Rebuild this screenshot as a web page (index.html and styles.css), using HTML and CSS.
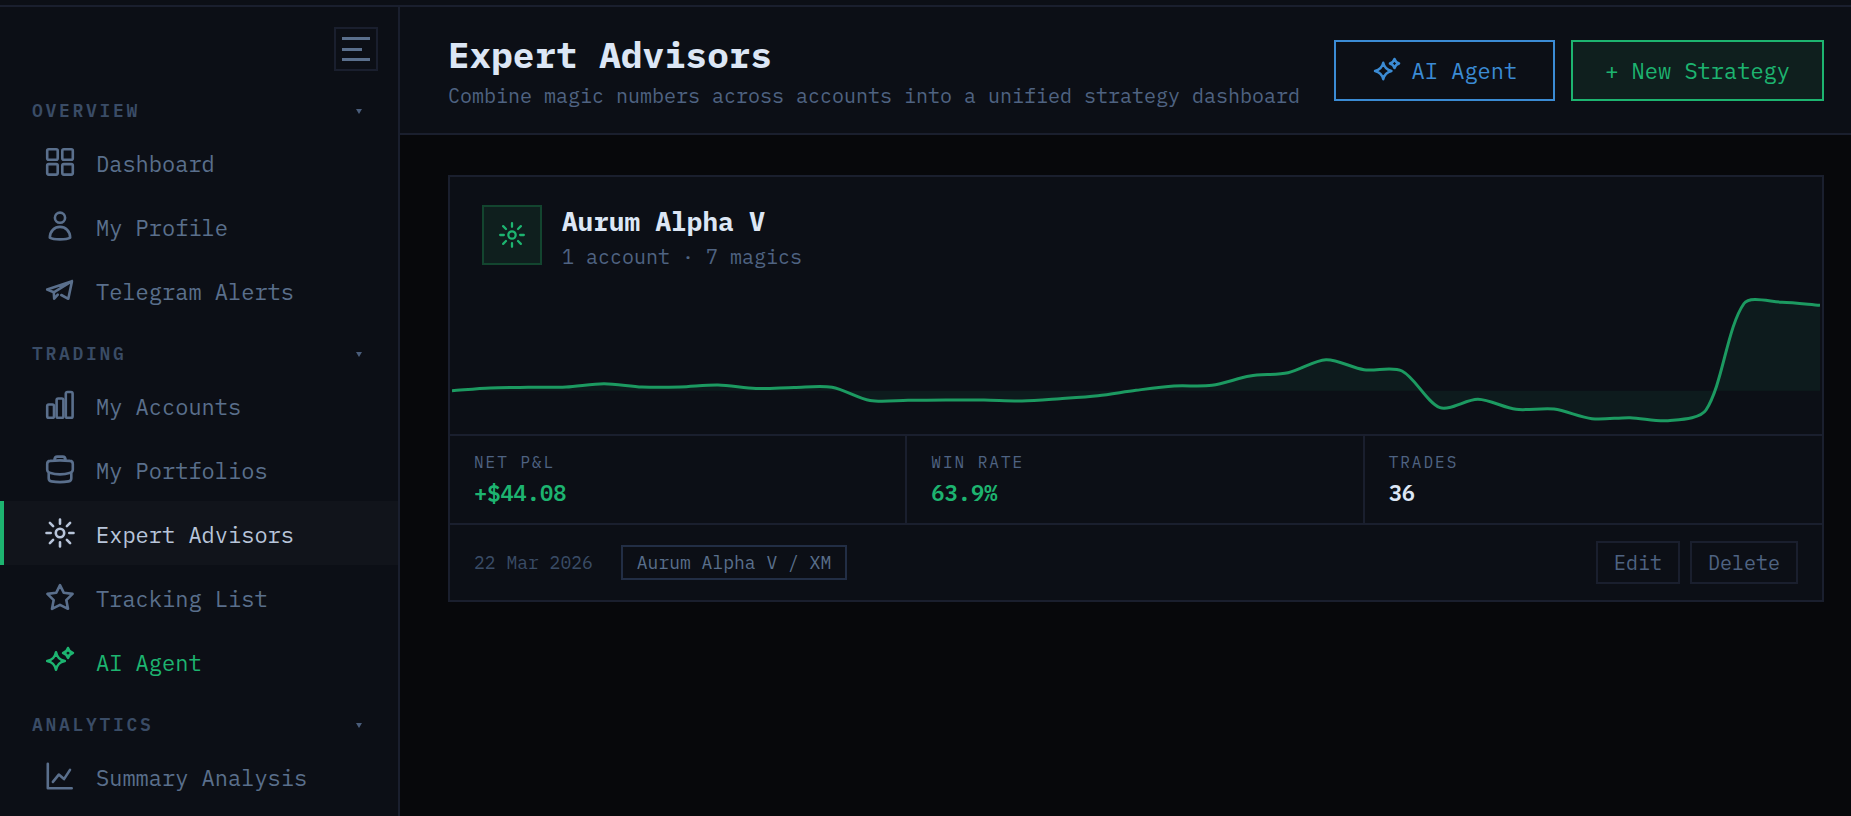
FILE: index.html
```html
<!DOCTYPE html>
<html lang="en">
<head>
    <meta charset="UTF-8">
    <meta name="viewport" content="width=device-width, initial-scale=1.0">
    <title>Expert Advisors</title>
    <link rel="stylesheet" href="styles.css">
</head>
<body>
    <div class="topbar"></div>
    <div class="layout">
        <aside class="sidebar">
            <div class="sidebar-top">
                <button class="menu-toggle" type="button" aria-label="Toggle menu">
                    <span></span>
                    <span class="short"></span>
                    <span></span>
                </button>
            </div>
            <nav>
                <h2 class="nav-section">Overview<i class="caret"></i></h2>
                <a href="#" class="nav-item">
                    <svg class="icon" viewBox="0 0 32 32"><rect x="3.2" y="3.2" width="10.5" height="10.5" rx="1.5"/><rect x="18.3" y="3.2" width="10.5" height="10.5" rx="1.5"/><rect x="3.2" y="18.1" width="10.5" height="10.5" rx="1.5"/><rect x="18.3" y="18.1" width="10.5" height="10.5" rx="1.5"/></svg>
                    <span>Dashboard</span>
                </a>
                <a href="#" class="nav-item">
                    <svg class="icon" viewBox="0 0 32 32"><circle cx="16" cy="7.7" r="5.1"/><path d="M5.8 27.6C6 21 10.6 16.9 16 16.9s10 4.1 10.2 10.7C22.5 29.9 9.5 29.9 5.8 27.6z"/></svg>
                    <span>My Profile</span>
                </a>
                <a href="#" class="nav-item">
                    <svg class="icon" viewBox="0 0 32 32"><path d="M28 7.2 3.2 15.6l6.6 2.7.4 6.3 3.6-4M28 7.2l-3.7 17.6-7-3.8M28 7.2 9.8 18.3"/></svg>
                    <span>Telegram Alerts</span>
                </a>

                <h2 class="nav-section">Trading<i class="caret"></i></h2>
                <a href="#" class="nav-item">
                    <svg class="icon" viewBox="0 0 32 32"><rect x="3.2" y="15.5" width="6.8" height="13.3" rx="1.6"/><rect x="12.6" y="9.5" width="6.8" height="19.3" rx="1.6"/><rect x="21.8" y="3" width="6.8" height="25.8" rx="1.6"/></svg>
                    <span>My Accounts</span>
                </a>
                <a href="#" class="nav-item">
                    <svg class="icon" viewBox="0 0 32 32"><path d="M10.4 7.6C10.4 4.8 11.4 3.6 13.4 3.6h5.2c2 0 3 1.2 3 4M3.2 11c0-2 1.2-3 3-3.1 6-.6 13.6-.6 19.6 0 1.8.1 3 1.1 3 3.1v5.5c0 1.7-.8 2.7-2.4 3.2-6 1.9-14.8 1.9-20.8 0-1.6-.5-2.4-1.5-2.4-3.2zM4.7 19.2v6c0 1.8.9 2.9 2.7 3.2 5.2.9 12 .9 17.2 0 1.8-.3 2.7-1.4 2.7-3.2v-6"/></svg>
                    <span>My Portfolios</span>
                </a>
                <a href="#" class="nav-item active">
                    <svg class="icon" viewBox="0 0 32 32"><circle cx="16" cy="16" r="4.2"/><path d="M16 2.5v4.2M16 25.3v4.2M2.5 16h4.2M25.3 16h4.2M5.9 5.9l3.2 3.2M22.9 22.9l3.2 3.2M5.9 26.1l3.2-3.2M22.9 9.1l3.2-3.2"/></svg>
                    <span>Expert Advisors</span>
                </a>
                <a href="#" class="nav-item">
                    <svg class="icon" viewBox="0 0 32 32"><path d="M16 4.2 19.7 11.7 28.6 12.9 22.3 19.1 24 27.8 16 23.8 8 27.8 9.7 19.1 3.4 12.9 12.3 11.7z"/></svg>
                    <span>Tracking List</span>
                </a>
                <a href="#" class="nav-item ai">
                    <svg class="icon" viewBox="0 0 32 32"><path d="M12 7.2C13.2 12.6 15.4 14.8 20.8 16 15.4 17.2 13.2 19.4 12 24.8 10.8 19.4 8.6 17.2 3.2 16 8.6 14.8 10.8 12.6 12 7.2zM24 3.1C24.8 6 26 7.2 28.9 8 26 8.8 24.8 10 24 12.9 23.2 10 22 8.8 19.1 8 22 7.2 23.2 6 24 3.1z"/></svg>
                    <span>AI Agent</span>
                </a>

                <h2 class="nav-section">Analytics<i class="caret"></i></h2>
                <a href="#" class="nav-item">
                    <svg class="icon" viewBox="0 0 32 32"><path d="M3.8 3.8v24.5h23.9M8.9 21.9l5.9-7.3 5.2 4.5 6-9.2"/></svg>
                    <span>Summary Analysis</span>
                </a>
            </nav>
        </aside>

        <main class="main">
            <header class="page-header">
                <div>
                    <h1>Expert Advisors</h1>
                    <p class="subtitle">Combine magic numbers across accounts into a unified strategy dashboard</p>
                </div>
                <div class="header-actions">
                    <button class="btn btn-blue" type="button">
                        <svg class="icon" viewBox="0 0 32 32"><path d="M12 7.2C13.2 12.6 15.4 14.8 20.8 16 15.4 17.2 13.2 19.4 12 24.8 10.8 19.4 8.6 17.2 3.2 16 8.6 14.8 10.8 12.6 12 7.2zM24 3.1C24.8 6 26 7.2 28.9 8 26 8.8 24.8 10 24 12.9 23.2 10 22 8.8 19.1 8 22 7.2 23.2 6 24 3.1z"/></svg>
                        AI Agent
                    </button>
                    <button class="btn btn-green" type="button">+ New Strategy</button>
                </div>
            </header>

            <section class="content">
                <article class="card">
                    <div class="card-head">
                        <div class="card-icon">
                            <svg class="icon" viewBox="0 0 32 32"><circle cx="16" cy="16" r="4.2"/><path d="M16 2.5v4.2M16 25.3v4.2M2.5 16h4.2M25.3 16h4.2M5.9 5.9l3.2 3.2M22.9 22.9l3.2 3.2M5.9 26.1l3.2-3.2M22.9 9.1l3.2-3.2"/></svg>
                        </div>
                        <div>
                            <h3>Aurum Alpha V</h3>
                            <p class="card-meta">1 account · 7 magics</p>
                        </div>
                    </div>
                    <svg class="chart" viewBox="0 0 1368 145" preserveAspectRatio="none">
                        <path class="chart-area" id="chart-area"/>
                        <path class="chart-line" id="chart-line"/>
                    </svg>
                    <dl class="stats">
                        <div class="stat">
                            <dt>NET P&amp;L</dt>
                            <dd class="positive">+$44.08</dd>
                        </div>
                        <div class="stat">
                            <dt>WIN RATE</dt>
                            <dd class="positive">63.9%</dd>
                        </div>
                        <div class="stat">
                            <dt>TRADES</dt>
                            <dd>36</dd>
                        </div>
                    </dl>
                    <footer class="card-foot">
                        <span class="date">22 Mar 2026</span>
                        <span class="tag">Aurum Alpha V / XM</span>
                        <div class="card-actions">
                            <button class="btn-small" type="button">Edit</button>
                            <button class="btn-small" type="button">Delete</button>
                        </div>
                    </footer>
                </article>
            </section>
        </main>
    </div>
    <script src="script.js"></script>
</body>
</html>
```
FILE: styles.css
```css
* {
    box-sizing: border-box;
    margin: 0;
    padding: 0;
}
body {
    display: flex;
    flex-direction: column;
    height: 100vh;
    overflow: hidden;
    background-color: #07080b;
    color: #dce6f5;
    font-family: "IBM Plex Mono", "Liberation Mono", monospace;
    font-size: 22px;
}
button {
    font-family: inherit;
    background: none;
    cursor: pointer;
}
.topbar {
    flex: none;
    height: 7px;
    background-color: #0c0f16;
    border-bottom: 2px solid #1a1f2e;
}
.layout {
    display: flex;
    flex: 1;
    min-height: 0;
}
.icon {
    flex: none;
    width: 32px;
    height: 32px;
    fill: none;
    stroke: currentColor;
    stroke-width: 2.6;
    stroke-linecap: round;
    stroke-linejoin: round;
}

/* Sidebar */
.sidebar {
    flex: none;
    width: 400px;
    overflow: hidden;
    background-color: #0c0f16;
    border-right: 2px solid #1a1f2e;
}
.sidebar-top {
    display: flex;
    justify-content: flex-end;
    padding: 20px 20px 8px;
}
.menu-toggle {
    display: flex;
    flex-direction: column;
    justify-content: space-between;
    width: 44px;
    height: 44px;
    padding: 8px 6px;
    border: 2px solid #1a1f2e;
}
.menu-toggle span {
    width: 28px;
    height: 3px;
    background-color: #5a6f8c;
}
.menu-toggle .short {
    width: 20px;
}
.nav-section {
    display: flex;
    align-items: center;
    justify-content: space-between;
    padding: 20px 36px 7px 32px;
    color: #3a4c66;
    font-size: 18px;
    font-weight: 600;
    line-height: 24px;
    letter-spacing: 0.15em;
    text-transform: uppercase;
}
.caret {
    border: 3px solid transparent;
    border-top: 5px solid #4a5d7a;
    border-bottom: 0;
}
.nav-item {
    display: flex;
    align-items: center;
    gap: 20px;
    height: 64px;
    padding-left: 40px;
    border-left: 4px solid transparent;
    color: #5a6f8c;
    text-decoration: none;
}
.nav-item span {
    padding-top: 2px;
}
.nav-item.active {
    background-color: #11141b;
    border-left-color: #1db470;
    color: #b8c5da;
}
.nav-item.ai {
    color: #1db470;
}

/* Page header */
.main {
    flex: 1;
    min-width: 0;
}
.page-header {
    display: flex;
    align-items: flex-start;
    justify-content: space-between;
    height: 128px;
    padding: 24px 27px 0 48px;
    background-color: #0c0f16;
    border-bottom: 2px solid #1a1f2e;
}
h1 {
    font-size: 36px;
    line-height: 48px;
}
.subtitle {
    margin-top: 4px;
    color: #4f6382;
    font-size: 20px;
    line-height: 26px;
    white-space: nowrap;
}
.header-actions {
    display: flex;
    gap: 16px;
    padding-top: 9px;
}
.btn {
    display: flex;
    align-items: center;
    height: 61px;
    padding: 0 32px;
    border: 2px solid;
    font-size: 22px;
    white-space: nowrap;
}
.btn-blue {
    gap: 10px;
    padding: 0 36px;
    color: #3b8bd4;
}
.btn-blue .icon {
    width: 30px;
    height: 30px;
}
.btn-green {
    background-color: #0f1f1e;
    color: #1db470;
}

/* Strategy card */
.content {
    padding: 40px 27px 40px 48px;
}
.card {
    background-color: #0c0f16;
    border: 2px solid #1a1f2e;
}
.card-head {
    display: flex;
    align-items: flex-start;
    gap: 20px;
    padding: 28px 32px 19px;
}
.card-icon {
    display: flex;
    align-items: center;
    justify-content: center;
    width: 60px;
    height: 60px;
    background-color: #0f1f1e;
    border: 2px solid #13452f;
    color: #1db470;
}
.card-icon .icon {
    width: 28px;
    height: 28px;
}
h3 {
    font-size: 26px;
    line-height: 33px;
}
.card-meta {
    margin-top: 6px;
    color: #4f6382;
    font-size: 20px;
    line-height: 26px;
}
.chart {
    display: block;
    width: 100%;
    height: 145px;
    padding: 0 2px;
}
.chart-area {
    fill: #1db470;
    fill-opacity: 0.08;
}
.chart-line {
    fill: none;
    stroke: #1c9a61;
    stroke-width: 3;
    vector-effect: non-scaling-stroke;
}
.stats {
    display: grid;
    grid-template-columns: repeat(3, 1fr);
    border-top: 2px solid #1a1f2e;
    border-bottom: 2px solid #1a1f2e;
}
.stat {
    padding: 15px 24px 16px;
    border-right: 2px solid #1a1f2e;
}
.stat:last-child {
    border-right: 0;
}
.stat dt {
    color: #4f6382;
    font-size: 16px;
    line-height: 22px;
    letter-spacing: 2px;
}
.stat dd {
    margin-top: 6px;
    font-size: 22px;
    font-weight: 600;
    line-height: 28px;
}
.stat .positive {
    color: #1db470;
}
.card-foot {
    display: flex;
    align-items: center;
    padding: 16px 24px;
    font-size: 18px;
}
.date {
    color: #3a4c66;
}
.tag {
    margin-left: 28px;
    padding: 0 14px;
    border: 2px solid #222e45;
    color: #5a6f8c;
    line-height: 31px;
}
.card-actions {
    display: flex;
    gap: 10px;
    margin-left: auto;
}
.btn-small {
    height: 43px;
    padding: 0 16px;
    border: 2px solid #1a1f2e;
    color: #4f6382;
    font-size: 20px;
}
```
FILE: script.js
```js
// Equity after each trade, as heights in the chart's viewBox
const points = [
    101.7, 99, 98.3, 98, 94.7, 98, 98, 96, 99.5, 98.5, 98.3, 111.5, 111.3,
    111, 111, 112, 109.7, 106.7, 101.3, 97, 96.3, 87, 83.7, 70.7, 80.7, 82,
    118.7, 110.3, 120.3, 120, 129.7, 128.7, 131.7, 121, 14.5, 13.2, 16.3
].map((y, i) => ({ x: i * 38, y: y }));

const baseline = points[0].y;
const tension = 0.3;

function controlPoints(prev, cur, next) {
    const d1 = Math.hypot(cur.x - prev.x, cur.y - prev.y);
    const d2 = Math.hypot(next.x - cur.x, next.y - cur.y);
    const a = tension * d1 / (d1 + d2 || 1);
    const b = tension * d2 / (d1 + d2 || 1);
    const dx = next.x - prev.x;
    const dy = next.y - prev.y;
    return {
        before: `${cur.x - a * dx} ${cur.y - a * dy}`,
        after: `${cur.x + b * dx} ${cur.y + b * dy}`
    };
}

const controls = points.map((p, i) => controlPoints(points[i - 1] || p, p, points[i + 1] || p));

let line = `M${points[0].x} ${points[0].y}`;
for (let i = 1; i < points.length; i++) {
    line += ` C${controls[i - 1].after} ${controls[i].before} ${points[i].x} ${points[i].y}`;
}

document.getElementById("chart-line").setAttribute("d", line);
document.getElementById("chart-area").setAttribute("d", `${line} V${baseline} H0 Z`);
```
